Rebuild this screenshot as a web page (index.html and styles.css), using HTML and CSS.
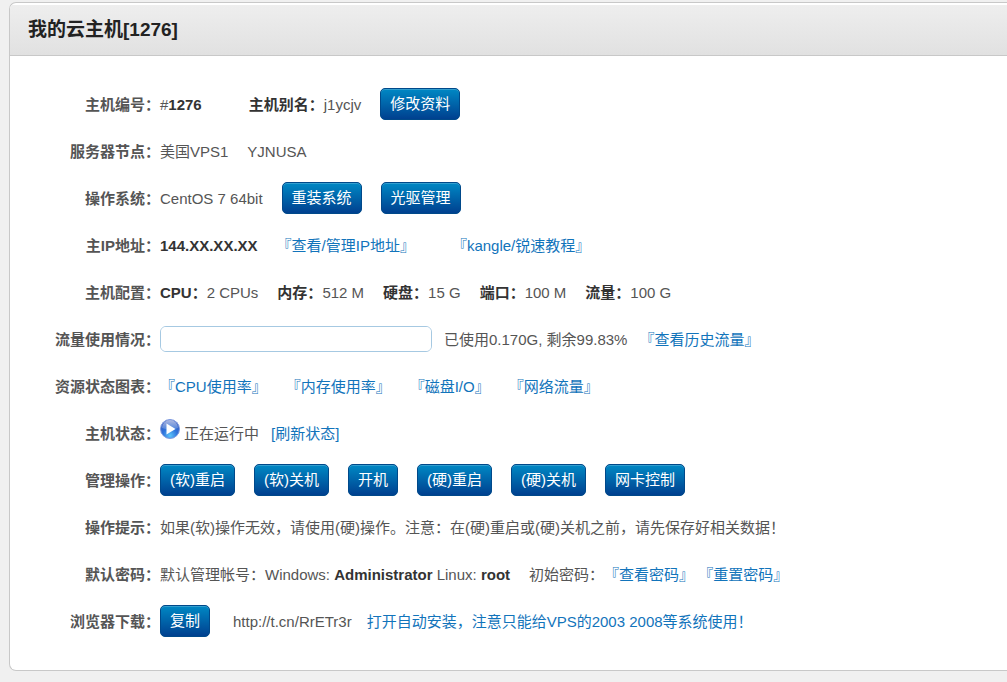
FILE: index.html
```
<!DOCTYPE html>
<html lang="zh-CN">
<head>
  <meta charset="UTF-8" />
  <title>我的云主机[1276]</title>
  <link rel="stylesheet" href="styles.css">
</head>
<body>
  <div class="panel">
    <div class="panel-header">
      <h3>我的云主机[1276]</h3>
    </div>
    <div class="panel-body">
      <table class="info">
        <tr>
          <th scope="row">主机编号：</th>
          <td>
            <div class="line">
              <span class="alias-gap">#<b>1276</b></span>
              <span><b>主机别名：</b>j1ycjv</span>
              <button type="button" class="btn">修改资料</button>
            </div>
          </td>
        </tr>
        <tr>
          <th scope="row">服务器节点：</th>
          <td>
            <div class="line">
              <span>美国VPS1</span>
              <span>YJNUSA</span>
            </div>
          </td>
        </tr>
        <tr>
          <th scope="row">操作系统：</th>
          <td>
            <div class="line">
              <span>CentOS 7 64bit</span>
              <button type="button" class="btn">重装系统</button>
              <button type="button" class="btn">光驱管理</button>
            </div>
          </td>
        </tr>
        <tr>
          <th scope="row">主IP地址：</th>
          <td>
            <div class="line">
              <b>144.XX.XX.XX</b>
              <a href="#" class="ip-link">『查看/管理IP地址』</a>
              <a href="#">『kangle/锐速教程』</a>
            </div>
          </td>
        </tr>
        <tr>
          <th scope="row">主机配置：</th>
          <td>
            <div class="line">
              <span><b>CPU：</b>2 CPUs</span>
              <span><b>内存：</b>512 M</span>
              <span><b>硬盘：</b>15 G</span>
              <span><b>端口：</b>100 M</span>
              <span><b>流量：</b>100 G</span>
            </div>
          </td>
        </tr>
        <tr>
          <th scope="row"><label for="traffic">流量使用情况：</label></th>
          <td>
            <div class="line medium">
              <progress id="traffic" value="0" max="100"></progress>
              <span>已使用0.170G, 剩余99.83%</span>
              <a href="#">『查看历史流量』</a>
            </div>
          </td>
        </tr>
        <tr>
          <th scope="row">资源状态图表：</th>
          <td>
            <div class="line">
              <a href="#">『CPU使用率』</a>
              <a href="#">『内存使用率』</a>
              <a href="#">『磁盘I/O』</a>
              <a href="#">『网络流量』</a>
            </div>
          </td>
        </tr>
        <tr>
          <th scope="row">主机状态：</th>
          <td>
            <div class="line medium">
              <span class="status">
                <svg class="play" viewBox="0 0 20 20" aria-hidden="true">
                  <defs>
                    <radialGradient id="ball" cx="50%" cy="85%" r="85%">
                      <stop offset="0" stop-color="#5cc4fa" />
                      <stop offset="0.45" stop-color="#2f74dc" />
                      <stop offset="1" stop-color="#3450b4" />
                    </radialGradient>
                    <linearGradient id="shine" x1="0" y1="0" x2="0" y2="1">
                      <stop offset="0" stop-color="#fff" stop-opacity="0.6" />
                      <stop offset="1" stop-color="#fff" stop-opacity="0.15" />
                    </linearGradient>
                  </defs>
                  <circle cx="10" cy="10" r="9.5" fill="url(#ball)" stroke="#7f9be0" />
                  <path d="M2 9a8 8 0 0 1 16 0q-8 3-16 0z" fill="url(#shine)" />
                  <path d="M6.5 4.5v11l9-5.5z" fill="#fff" />
                </svg>
                正在运行中
              </span>
              <a href="#">[刷新状态]</a>
            </div>
          </td>
        </tr>
        <tr>
          <th scope="row">管理操作：</th>
          <td>
            <div class="line">
              <button type="button" class="btn">(软)重启</button>
              <button type="button" class="btn">(软)关机</button>
              <button type="button" class="btn">开机</button>
              <button type="button" class="btn">(硬)重启</button>
              <button type="button" class="btn">(硬)关机</button>
              <button type="button" class="btn">网卡控制</button>
            </div>
          </td>
        </tr>
        <tr>
          <th scope="row">操作提示：</th>
          <td>如果(软)操作无效，请使用(硬)操作。注意：在(硬)重启或(硬)关机之前，请先保存好相关数据！</td>
        </tr>
        <tr>
          <th scope="row">默认密码：</th>
          <td>
            <div class="line">
              <span>默认管理帐号：Windows: <b>Administrator</b> Linux: <b>root</b></span>
              <span>初始密码：<a href="#">『查看密码』</a> <a href="#">『重置密码』</a></span>
            </div>
          </td>
        </tr>
        <tr>
          <th scope="row">浏览器下载：</th>
          <td>
            <div class="line">
              <button type="button" class="btn">复制</button>
              <span class="download">
                <span>http://t.cn/RrETr3r</span>
                <a href="#">打开自动安装，注意只能给VPS的2003 2008等系统使用！</a>
              </span>
            </div>
          </td>
        </tr>
      </table>
    </div>
  </div>
</body>
</html>
```
FILE: styles.css
```
body {
  margin: 0;
  padding: 2px 0 11px 9px;
  background: #f0f0f0;
  color: #555;
  font-family: "Liberation Sans", Arial, "Noto Sans CJK SC", sans-serif;
  font-size: 15px;
  line-height: 20px;
  text-spacing-trim: space-all;
}
.panel {
  background: #fff;
  border: 1px solid #c8c8c8;
  border-right: none;
  border-radius: 7px 0 0 7px;
  overflow: hidden;
}
.panel-header {
  margin-top: 2px;
  padding: 12px 18px;
  background: linear-gradient(#eee, #e1e1e1);
  border-bottom: 1px solid #c8c8c8;
}
h3 {
  margin: 0;
  color: #222;
  font-size: 19px;
  line-height: 26px;
}
.panel-body {
  padding: 25px 0;
}
.info {
  width: 100%;
  border-collapse: collapse;
}
.info th,
.info td {
  height: 47px;
  padding: 0;
  text-align: left;
  white-space: nowrap;
}
.info th {
  width: 150px;
  color: #555;
  text-align: right;
}
b {
  color: #333;
}
a {
  color: #1274bb;
  text-decoration: none;
}
a:hover {
  text-decoration: underline;
}
.line {
  display: flex;
  align-items: center;
  gap: 19px;
}
.line.medium {
  gap: 12px;
}
.alias-gap {
  margin-right: 28px;
}
.ip-link {
  margin-right: 18px;
}
.btn {
  height: 32px;
  margin: 0 0 2px;
  padding: 0 9px;
  border: 1px solid #00498a;
  border-radius: 5px;
  background: linear-gradient(#0088c4, #00408f);
  box-shadow: inset 0 1px 0 rgba(255, 255, 255, 0.2);
  color: #fff;
  font: inherit;
  cursor: pointer;
}
.btn:hover {
  background: #00408f;
}
progress {
  width: 272px;
  height: 26px;
  margin-bottom: 2px;
  box-sizing: border-box;
  appearance: none;
  border: 1px solid #a6c9e2;
  border-radius: 6px;
  background: #fff;
  overflow: hidden;
}
progress::-webkit-progress-bar {
  background: #fff;
}
progress::-webkit-progress-value {
  background: #a6c9e2;
}
.status {
  display: flex;
  align-items: center;
  gap: 4px;
}
.play {
  width: 20px;
  height: 20px;
  margin-bottom: 9px;
}
.download {
  display: flex;
  gap: 15px;
  margin-left: 4px;
}
```
